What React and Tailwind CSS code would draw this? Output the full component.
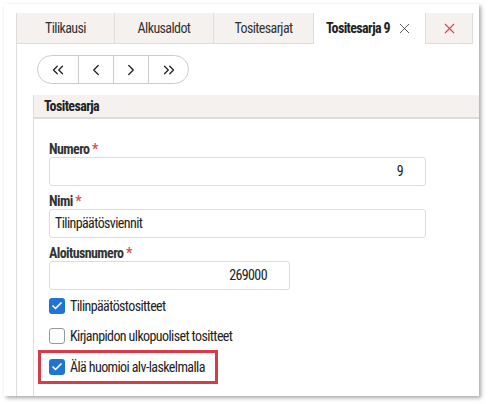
import React from 'react';
import { ChevronsLeft, ChevronLeft, ChevronRight, ChevronsRight, X, Check } from 'lucide-react';

const font = { fontFamily: '"Roboto Condensed", "Liberation Sans Narrow", "DejaVu Sans Condensed", sans-serif' };

const tabs = [
  { label: 'Tilikausi', w: 'w-[98px]' },
  { label: 'Alkusaldot', w: 'w-[99px]' },
  { label: 'Tositesarjat', w: 'w-[100px]' },
];

const Label = ({ children, className = '' }) => (
  <div className={`text-[14px] leading-[16px] font-bold tracking-[-0.6px] text-[#333] ${className}`}>
    {children} <span className="text-[#d9534f]">*</span>
  </div>
);

const Box = ({ checked }) =>
  checked ? (
    <span className="w-[16px] h-[16px] rounded-[3px] bg-[#1f74d4] flex items-center justify-center shrink-0">
      <Check className="w-[12px] h-[12px] text-white stroke-[3.5]" />
    </span>
  ) : (
    <span className="w-[16px] h-[16px] rounded-[3px] border border-[#999] bg-white shrink-0" />
  );

export default function App() {
  return (
    <div className="w-[488px] h-[404px] bg-white pt-[4px] pl-[4px]" style={font}>
      <div className="w-[475px] h-[392px] bg-white shadow-[2px_2px_4px_rgba(0,0,0,0.35)] overflow-hidden pl-[12px] pt-[9px]">
        <div className="h-full border-l border-[#ddd] flex flex-col">
          {/* tabs */}
          <div className="flex h-[31px] shrink-0 text-[14px] tracking-[-0.6px]">
            {tabs.map((t) => (
              <div
                key={t.label}
                className={`${t.w} bg-[#f4f1ee] border-r border-b border-[#ddd] flex items-center justify-center text-[#333]`}
              >
                {t.label}
              </div>
            ))}
            <div className="w-[111px] bg-white flex items-center justify-center gap-[6px] font-bold text-[#222]">
              Tositesarja 9
              <X className="w-[17px] h-[17px] text-[#444] stroke-[1.25]" />
            </div>
            <div className="w-[48px] bg-[#f4f1ee] border-l border-r border-b border-[#ddd] flex items-center justify-center">
              <X className="w-[17px] h-[17px] text-[#e0414f] stroke-[1.6]" />
            </div>
          </div>

          <div className="pl-[20px] pt-[11px]">
            {/* pager */}
            <div className="flex w-[152px] h-[29px] border border-[#ccc] rounded-full text-[#222]">
              <div className="w-[41px] flex items-center justify-center border-r border-[#ccc]">
                <ChevronsLeft className="w-[18px] h-[18px] stroke-[1.75]" />
              </div>
              <div className="w-[35px] flex items-center justify-center border-r border-[#ccc]">
                <ChevronLeft className="w-[18px] h-[18px] stroke-[1.75]" />
              </div>
              <div className="w-[35px] flex items-center justify-center border-r border-[#ccc]">
                <ChevronRight className="w-[18px] h-[18px] stroke-[1.75]" />
              </div>
              <div className="flex-1 flex items-center justify-center">
                <ChevronsRight className="w-[18px] h-[18px] stroke-[1.75]" />
              </div>
            </div>
          </div>

          {/* section */}
          <div className="ml-[16px] mt-[11px] w-[470px] flex-1 border-l border-[#ddd] flex flex-col">
            <div className="h-[24px] bg-[#f4f1ee] border-b-2 border-[#dedad5] flex items-center pl-[10px] text-[14px] tracking-[-0.6px] font-bold text-[#222]">
              Tositesarja
            </div>
            <div className="pl-[15px] pt-[22px] text-[14px] tracking-[-0.6px] text-[#222]">
              <Label>Numero</Label>
              <div className="w-[377px] h-[29px] border border-[#ddd] rounded-[3px] flex items-center justify-end pr-[22px]">
                9
              </div>
              <Label className="mt-[7px]">Nimi</Label>
              <div className="w-[377px] h-[29px] border border-[#ddd] rounded-[3px] flex items-center pl-[5px]">
                Tilinpäätösviennit
              </div>
              <Label className="mt-[7px]">Aloitusnumero</Label>
              <div className="w-[241px] h-[29px] border border-[#ddd] rounded-[3px] flex items-center justify-end pr-[22px]">
                269000
              </div>

              <div className="mt-[8px] flex flex-col gap-[14px]">
                <label className="flex items-center gap-[5px] h-[16px] whitespace-nowrap">
                  <Box checked />
                  Tilinpäätöstositteet
                </label>
                <label className="flex items-center gap-[5px] h-[16px] whitespace-nowrap">
                  <Box />
                  Kirjanpidon ulkopuoliset tositteet
                </label>
                <div className="-ml-[11px] -mt-[8px] w-[180px] h-[34px] border-[3px] border-[#d93a48] flex items-center pl-[8px]">
                  <label className="flex items-center gap-[5px] h-[16px] whitespace-nowrap">
                    <Box checked />
                    Älä huomioi alv-laskelmalla
                  </label>
                </div>
              </div>
            </div>
          </div>
        </div>
      </div>
    </div>
  );
}
